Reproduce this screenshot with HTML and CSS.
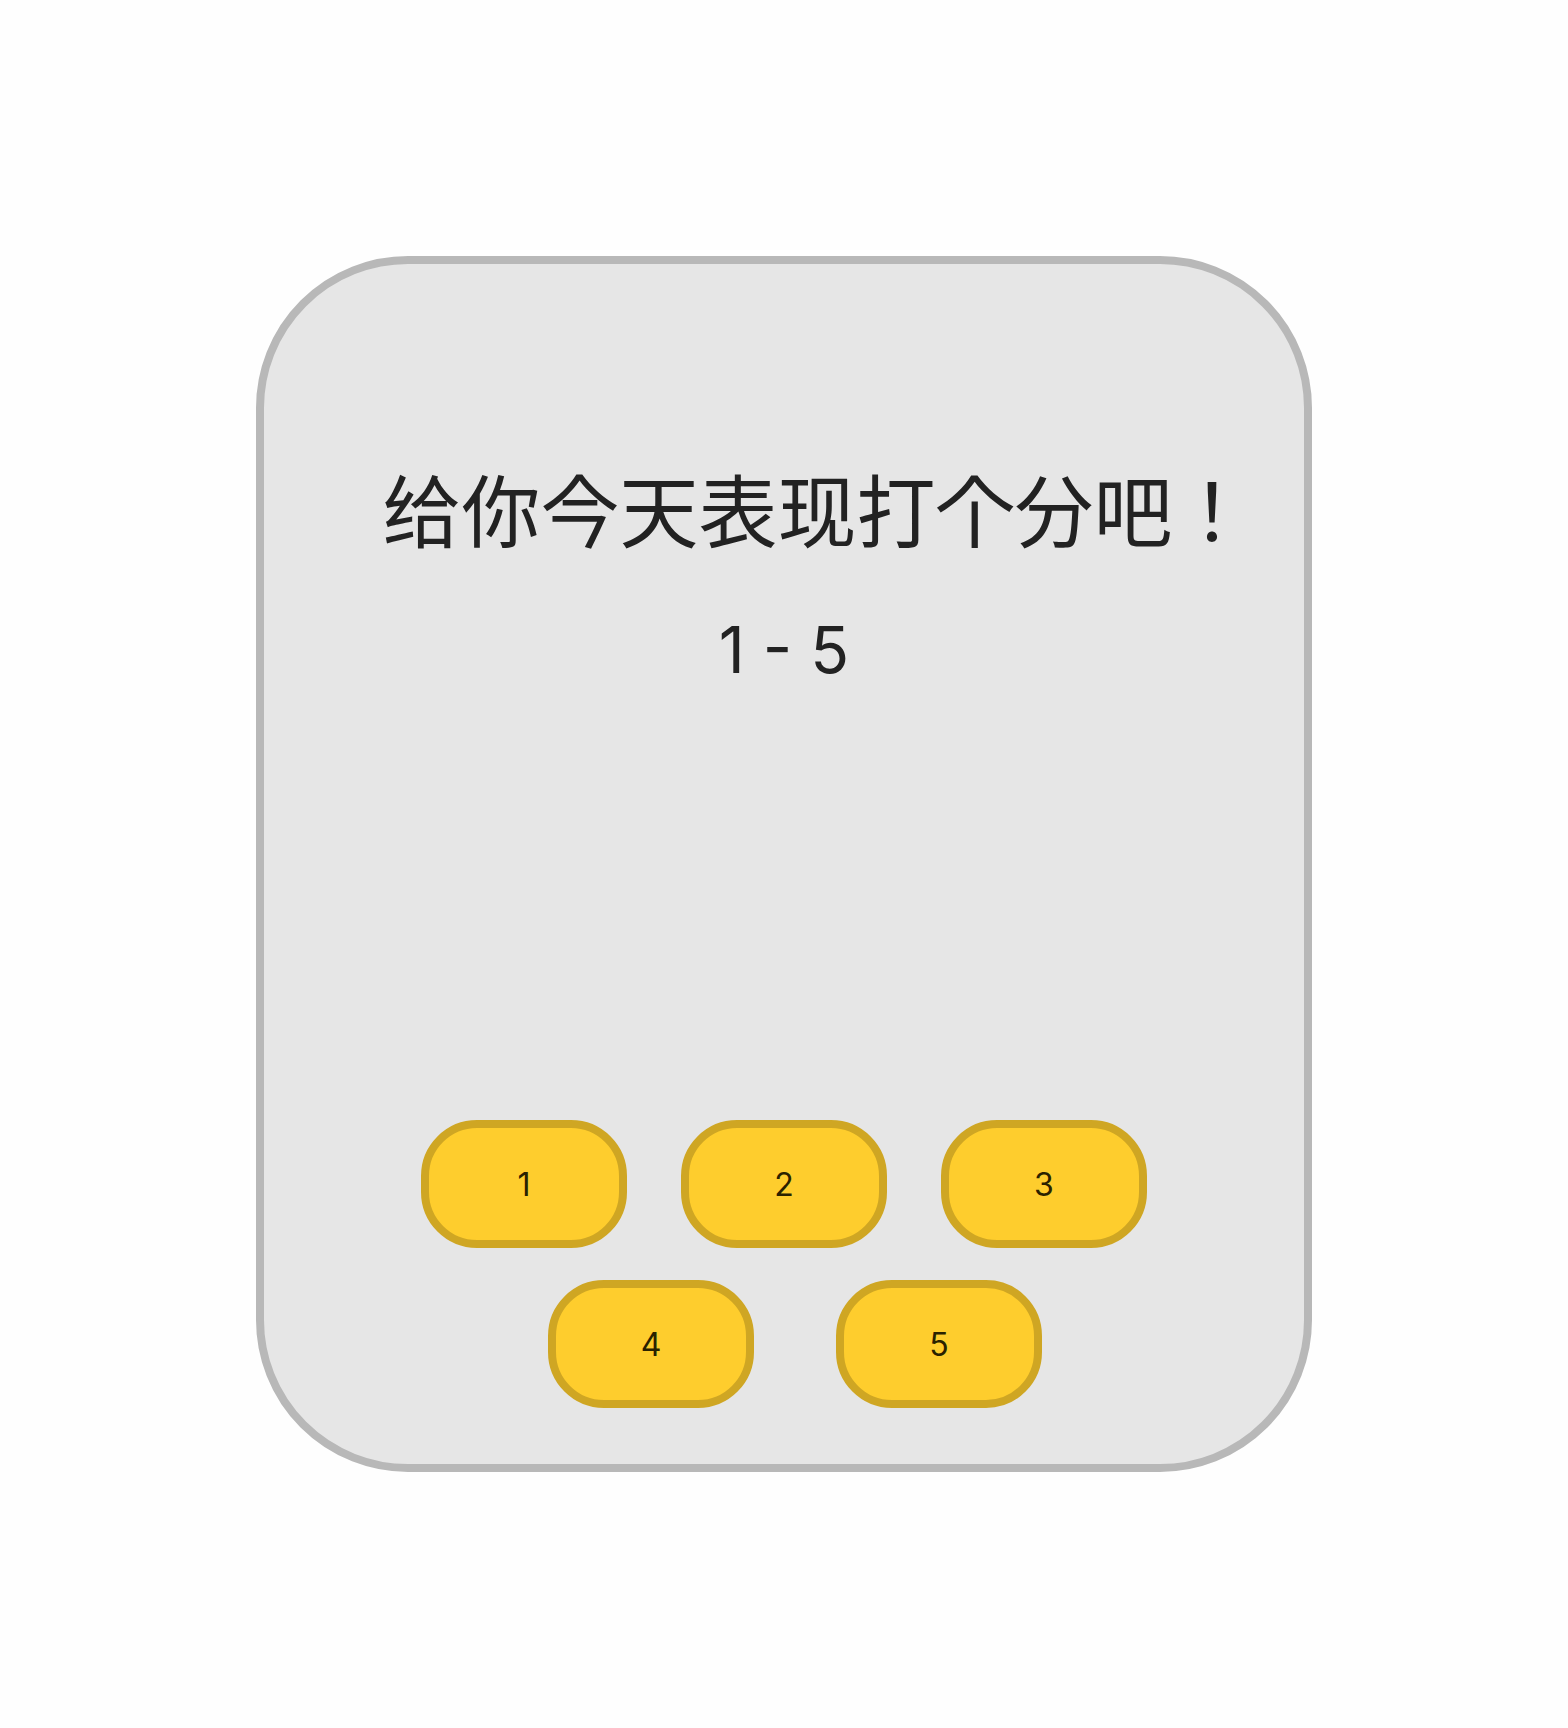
FILE: index.html
```html
<!DOCTYPE html>
<html>
<head>
<meta charset="utf-8">
<link rel="stylesheet" href="styles.css">
</head>
<body>
<div class="card">
  <h1 class="title">给你今天表现打个分吧！</h1>
  <div class="range">1 - 5</div>
  <div class="buttons">
    <div class="row row-top">
      <button class="btn">1</button>
      <button class="btn">2</button>
      <button class="btn">3</button>
    </div>
    <div class="row row-bottom">
      <button class="btn">4</button>
      <button class="btn">5</button>
    </div>
  </div>
</div>
</body>
</html>
```
FILE: styles.css
```css
html, body {
  margin: 0;
  padding: 0;
  background: #fefefe;
}
body {
  padding-top: 256px;
  font-family: Inter, "Noto Sans CJK JP", sans-serif;
  color: #222222;
}
.card {
  box-sizing: border-box;
  width: 1056px;
  height: 1216px;
  margin: 0 auto;
  background: #e6e6e6;
  border: 8px solid #b8b8b8;
  border-radius: 152px;
  display: flex;
  flex-direction: column;
  align-items: center;
}
.title {
  margin: 204px 0 0 0;
  padding-left: 66px;
  font-family: "Noto Sans CJK JP", "Noto Sans CJK SC", sans-serif;
  font-weight: 400;
  font-size: 79px;
  line-height: 80px;
  letter-spacing: 0;
  color: #222222;
  white-space: nowrap;
  text-spacing-trim: space-all;
}
.range {
  margin-top: 62px;
  font-size: 64px;
  line-height: 80px;
  color: #222222;
}
.buttons {
  margin-top: 430px;
  display: flex;
  flex-direction: column;
  gap: 32px;
  align-items: center;
}
.row {
  display: flex;
  justify-content: center;
}
.row-top {
  gap: 54px;
}
.row-bottom {
  gap: 82px;
  padding-left: 22px;
}
.btn {
  box-sizing: border-box;
  width: 206px;
  height: 128px;
  background: #fecd2d;
  border: 8px solid #cfa623;
  border-radius: 56px;
  font-family: Inter, sans-serif;
  font-size: 32px;
  color: #2a2200;
  padding: 0;
  cursor: pointer;
}
```
